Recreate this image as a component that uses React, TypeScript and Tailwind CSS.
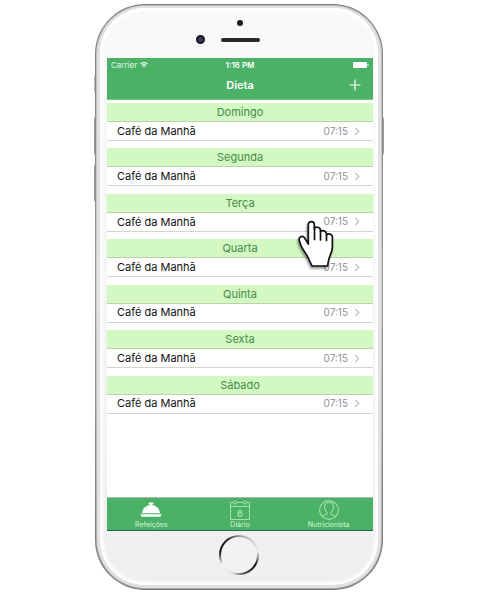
import React from "react";

const days = ["Domingo", "Segunda", "Terça", "Quarta", "Quinta", "Sexta", "Sábado"];

function Wifi() {
  return (
    <svg viewBox="0 0 16 12" className="h-[6px] w-2" fill="none" stroke="white" strokeWidth="2.2">
      <path d="M1 4.2a10 10 0 0 1 14 0" />
      <path d="M3.600 7.200a6.300 6.300 0 0 1 8.800 0" />
      <path d="M5.600 9a3.400 3.400 0 0 1 4.800 0L8 11.600z" fill="white" stroke="none" />
    </svg>
  );
}

function Battery() {
  return (
    <svg viewBox="0 0 16 6" className="h-[6px] w-4" fill="white">
      <rect width="14" height="6" rx="1" />
      <rect x="14.500" y="2" width="1" height="2" rx=".5" />
    </svg>
  );
}

function Bell() {
  return (
    <svg viewBox="0 0 22 16" className="h-4 w-[22px]" fill="white">
      <rect x="8.500" y="0.500" width="5" height="2" rx="1" />
      <rect x="10.200" y="1.500" width="1.600" height="2" />
      <path d="M2 11.300a9 8.300 0 0 1 18 0z" />
      <path d="M.5 12.200h21l-1 2.600h-19z" />
      <path d="M5 8q1.200-2 3-2.700" fill="none" stroke="#a5d8b2" strokeWidth=".5" />
    </svg>
  );
}

function Calendar() {
  return (
    <svg viewBox="0 0 20 20" className="h-5 w-5" fill="none" stroke="#a3e3a6">
      <path d="M3.300 2.500H.5v17h19v-17h-2.800M6.700 2.500h6.600M.5 6.500h19" />
      <circle cx="5" cy="2.500" r="1.600" />
      <circle cx="15" cy="2.500" r="1.600" />
      <text x="10" y="16.500" textAnchor="middle" fontSize="9" fontFamily="Inter, sans-serif" fontWeight="600" fill="#a3e3a6" stroke="none">6</text>
    </svg>
  );
}

function Person() {
  return (
    <svg viewBox="0 0 20 20" className="h-5 w-5" fill="none" stroke="#a3e3a6" strokeWidth="1.100">
      <circle cx="10" cy="10" r="9.400" />
      <path d="M3.500 16.500c1-1.500 4.500-1 4.700-3 .1-1.500-2.700-3-2.700-6.500 0-3 2-4.500 4.500-4.500S14.500 4 14.500 7c0 3.500-2.800 5-2.700 6.500.2 2 3.700 1.500 4.700 3" />
    </svg>
  );
}

function Hand() {
  return (
    <svg viewBox="0 0 38 50" className="h-[50px] w-[38px] drop-shadow-[-1px_2px_1px_rgba(0,0,0,0.4)]" fill="white" stroke="#111" strokeWidth="1.700" strokeLinejoin="round" strokeLinecap="round">
      <path d="M15 46L11 37.500C9 33 5 29 3.500 24.500L2.300 20.500c-1-3.500 3.200-5.500 5.200-2.700L11.300 24V4.500c0-3.800 6-3.800 6 0V8.500c1.200-2 5.900-1.800 6.200 1.500v1.500c1.500-1.500 5.700-1 6 2v1.300c1.800-1.600 5.700-.8 5.900 2V27c0 4-1.400 6-3.400 11.500L30.500 46z" />
      <path d="M17.500 8v11.500M23.500 11v9M29.500 14v6.500" fill="none" />
    </svg>
  );
}

export default function App() {
  return (
    <main className="flex min-h-screen items-start justify-center bg-white pt-1 font-['Inter',sans-serif]">
      <div className="relative w-72">
        <span className="absolute top-[112px] -left-px h-10 w-1 rounded-l-sm border border-[#999] bg-[#eee]" />
        <span className="absolute top-[159px] -left-px h-10 w-1 rounded-l-sm border border-[#999] bg-[#eee]" />
        <span className="absolute top-[70px] -left-px h-5 w-1 rounded-l-sm border border-[#bbb] bg-[#eee]" />
        <span className="absolute top-[112px] -right-px h-10 w-1 rounded-r-sm border border-[#999] bg-[#eee]" />
        <div className="relative rounded-[50px] bg-linear-to-b from-[#7d7d80] via-[#9b9b9f] to-[#77777b] p-px">
          <div className="rounded-[49px] bg-linear-to-b from-[#bdbdc0] via-[#cfcfd2] to-[#a5a5a8] p-px">
            <div className="rounded-[48px] bg-[#e2e2e5] p-[2px]">
              <div className="rounded-[46px] bg-[#dedee1] px-px pb-px">
                <div className="rounded-[45px] bg-linear-to-b from-[#f9f9f9] to-[#efefef] pr-[5px] pl-[7px] shadow-[inset_0_0_3px_3px_white]">
                  <div className="flex h-[50px] flex-col items-center pt-3">
                    <span className="size-[6px] rounded-full bg-[#16161a]" />
                    <div className="mt-[9px] flex w-[88px] items-center gap-4">
                      <span className="size-[9px] rounded-full border-2 border-[#16161c] bg-[#343d68]" />
                      <span className="h-1 w-[39px] rounded-full bg-[#2a2829]" />
                    </div>
                  </div>

                  <div className="flex h-[473px] flex-col bg-white">
                    <header className="border-b border-[#79c08a] bg-[#4bb166] text-white">
                      <div className="grid h-[14px] grid-cols-3 items-center px-1 text-[8px]">
                        <span className="flex items-center gap-[3px] text-[#e2f5e6]">Carrier <Wifi /></span>
                        <span className="text-center font-semibold">1:16 PM</span>
                        <span className="flex justify-end"><Battery /></span>
                      </div>
                      <div className="grid h-[27px] grid-cols-3 items-center px-3">
                        <h1 className="col-start-2 text-center text-[11px] font-semibold">Dieta</h1>
                        <button aria-label="Adicionar" className="justify-self-end pb-px">
                          <svg viewBox="0 0 12 12" className="block size-3" stroke="white" strokeWidth="1.200"><path d="M6 .5v11M.5 6h11" /></svg>
                        </button>
                      </div>
                    </header>

                    <div className="mt-[3px] grid h-[318px] grid-rows-7">
                      {days.map((day) => (
                        <section key={day}>
                          <h2 className="h-[19px] border-b border-[#b9d3ad] bg-[#d3f8c1] text-center text-[11px] leading-[19px] text-[#458b4c]">{day}</h2>
                          <button className="flex h-[19px] w-full items-center border-b border-[#d5d5cd] pr-[13px] pl-[10px] text-left">
                            <span className="flex-1 text-[11px] text-[#111]">Café da Manhã</span>
                            <span className="text-[10px] text-[#8f8f94]">07:15</span>
                            <svg viewBox="0 0 6 10" className="ml-[6px] h-[9px] w-[6px]" fill="none" stroke="#b9b9be" strokeWidth="1.200"><path d="M1 1l4 4-4 4" /></svg>
                          </button>
                        </section>
                      ))}
                    </div>

                    <nav className="mt-auto grid h-[34px] grid-cols-3 border-t border-b border-t-[#b0b8b0] border-b-[#1f6d50] bg-[#4bb166] text-[7px] leading-2 text-[#d5f5d8]">
                      <button className="flex flex-col items-center justify-end pb-px"><Bell /><span className="mt-[3px]">Refeições</span></button>
                      <button className="flex flex-col items-center justify-end pb-px"><Calendar /><span className="mt-px">Diário</span></button>
                      <button className="flex flex-col items-center justify-end pb-px"><Person /><span className="mt-px">Nutricionista</span></button>
                    </nav>
                  </div>

                  <div className="flex h-[54px] justify-center pt-1 pr-[2px]">
                    <button aria-label="Início" className="size-10 rounded-full bg-conic-[from_0deg,#999,#c9c9c9,#eee,#111,#444,#ddd,#f5f5f5,#111,#222,#999] p-[2px]">
                      <span className="block size-full rounded-full bg-[#f2f2f2]" />
                    </button>
                  </div>
                </div>
              </div>
            </div>
          </div>
        </div>
        <div className="pointer-events-none absolute top-[216px] left-[202px]"><Hand /></div>
      </div>
    </main>
  );
}
